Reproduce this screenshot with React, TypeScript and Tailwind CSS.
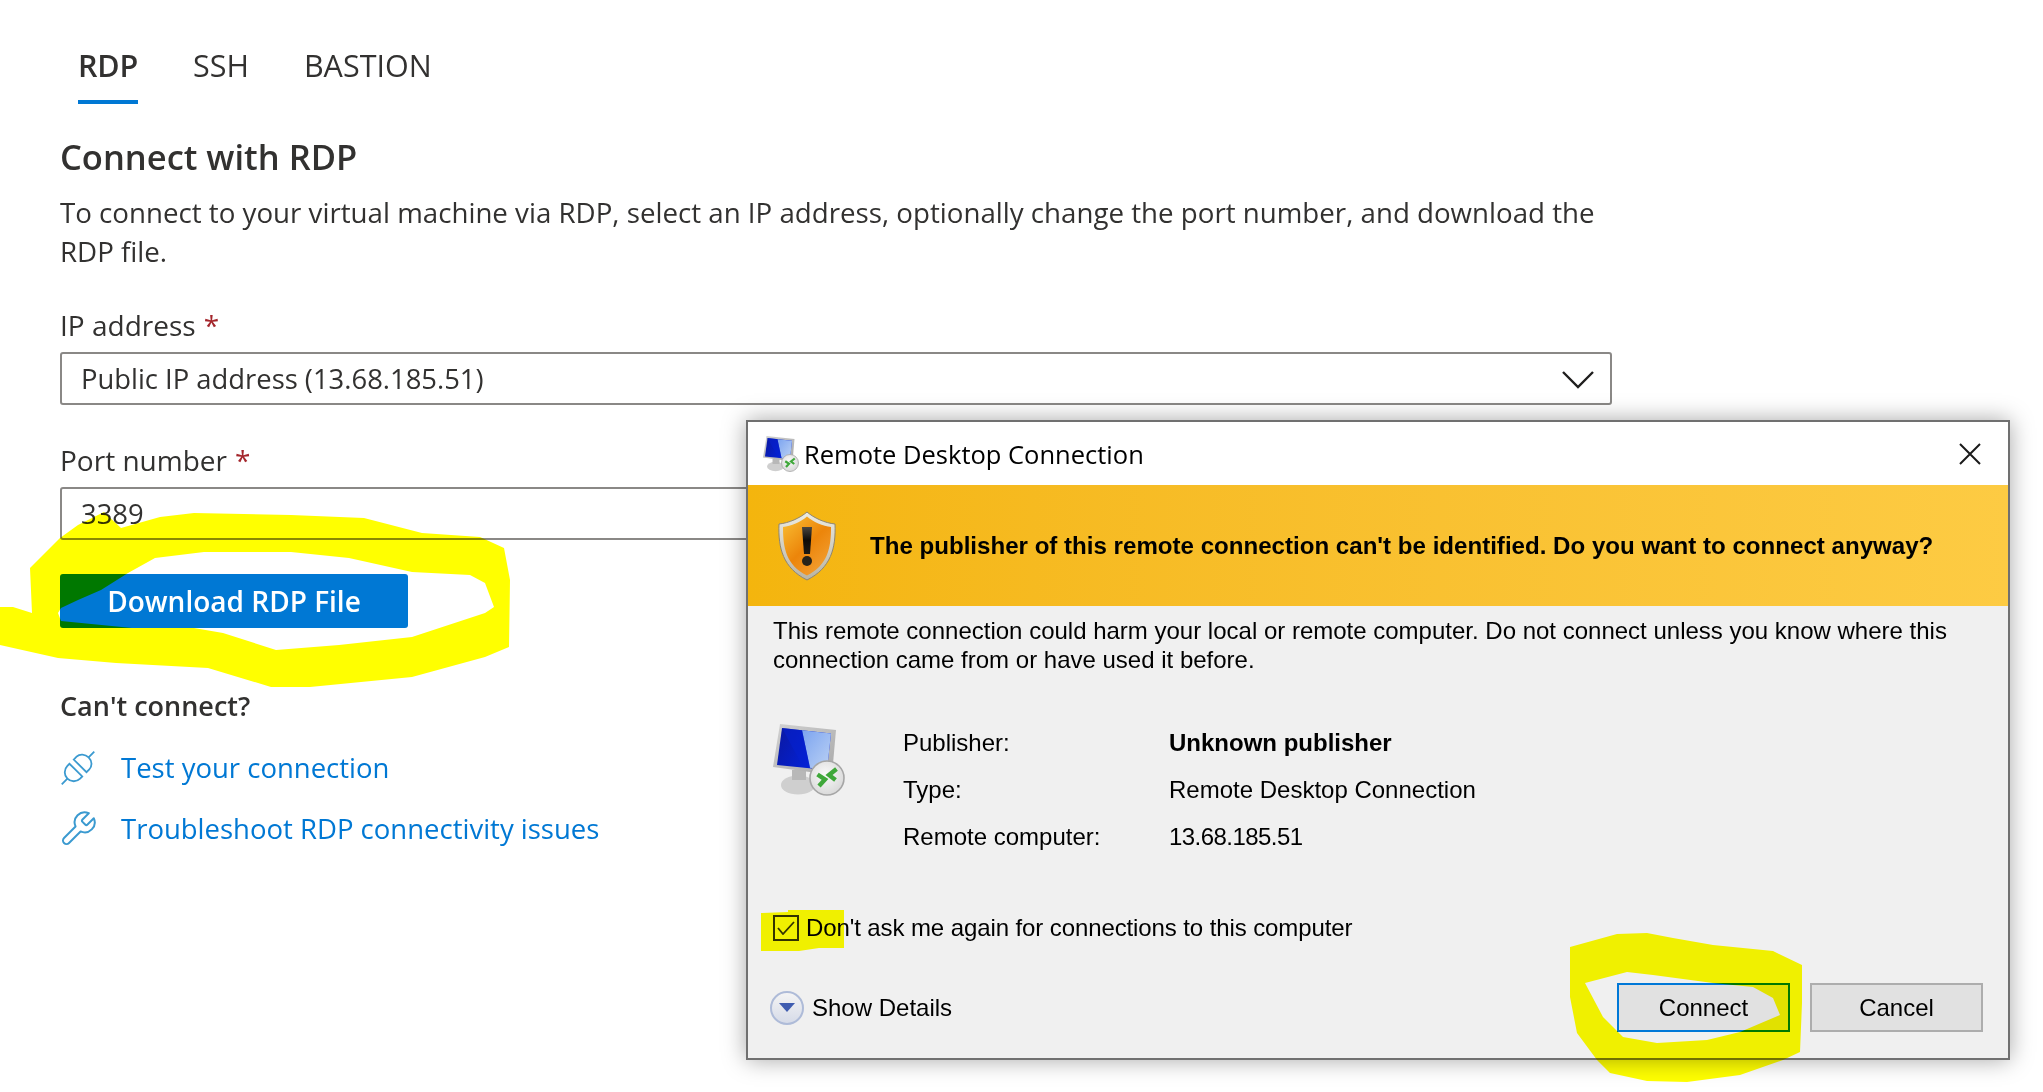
import React from "react";

const sans = "font-['Open_Sans','Noto_Sans',sans-serif]";
const arial = "font-['Liberation_Sans',Arial,sans-serif]";

function Monitor({ size }: { size: number }) {
  return (
    <svg width={size} height={size} viewBox="0 0 72 72" className="shrink-0">
      <defs>
        <linearGradient id={`bz${size}`} x1="0" y1="0" x2="1" y2="1">
          <stop offset="0" stopColor="#d2d2d2" />
          <stop offset="1" stopColor="#a8a8a8" />
        </linearGradient>
        <linearGradient id={`dk${size}`} x1="0" y1="0" x2="1" y2="0.4">
          <stop offset="0" stopColor="#0b18a0" />
          <stop offset="0.7" stopColor="#0420d0" />
          <stop offset="1" stopColor="#0a2ce0" />
        </linearGradient>
        <linearGradient id={`lt${size}`} x1="0" y1="0" x2="1" y2="1">
          <stop offset="0" stopColor="#7ca4f0" />
          <stop offset="1" stopColor="#bcd2f4" />
        </linearGradient>
        <radialGradient id={`rg${size}`} cx="0.45" cy="0.4" r="0.7">
          <stop offset="0" stopColor="#fafafa" />
          <stop offset="1" stopColor="#d4d4d4" />
        </radialGradient>
      </defs>
      <ellipse cx="25" cy="61" rx="17" ry="9.5" fill="#cfcfcf" />
      <path d="M19 46h14v10H19z" fill="#b8b8b8" />
      <path d="M7 0 63 6 59 51 0 43Z" fill={`url(#bz${size})`} />
      <path d="M9 4 58 9.5 54 46 4 41Z" fill={`url(#dk${size})`} />
      <path d="M29 6.3 58 9.5 54 46 37 43.8Z" fill={`url(#lt${size})`} />
      <path d="M9 4 29 6.3 37 43.8 30 43Z" fill="#0620d0" opacity="0.55" />
      <circle cx="54" cy="54" r="17" fill={`url(#rg${size})`} stroke="#a6a6a6" strokeWidth="1.6" />
      <path d="M44.5 50.5l7.5 5-6 6.5M63.5 45l-7.5 6 6.5 5" fill="none" stroke="#3fa83a" strokeWidth="4.4" />
    </svg>
  );
}

function Shield() {
  return (
    <svg width="58" height="70" viewBox="0 0 58 70" className="shrink-0">
      <defs>
        <linearGradient id="sh" x1="0.1" y1="0" x2="0.9" y2="1">
          <stop offset="0" stopColor="#f8bb30" />
          <stop offset="0.5" stopColor="#ec850a" />
          <stop offset="1" stopColor="#f4a43a" />
        </linearGradient>
        <linearGradient id="rim" x1="0" y1="0" x2="0" y2="1">
          <stop offset="0" stopColor="#ecebe2" />
          <stop offset="1" stopColor="#b9b4a4" />
        </linearGradient>
        <linearGradient id="ex" x1="0" y1="0" x2="0" y2="1">
          <stop offset="0" stopColor="#4a4640" />
          <stop offset="0.5" stopColor="#0d0b08" />
          <stop offset="1" stopColor="#1d1a14" />
        </linearGradient>
      </defs>
      <path d="M29 1C22 7 11 12 1 13c-1 24 4 44 28 56 24-12 29-32 28-56C47 12 36 7 29 1Z" fill="url(#rim)" stroke="#8e8571" strokeWidth="1" />
      <path d="M29 5.5C23 11 13 15 5 16c0 21 3 38 24 48.5C50 54 53 37 53 16 45 15 35 11 29 5.5Z" fill="url(#sh)" />
      <path d="M24 16h10l-2 27h-6Z" fill="url(#ex)" />
      <circle cx="29" cy="50" r="5" fill="#26221a" />
    </svg>
  );
}

function PlugIcon() {
  return (
    <svg width="36" height="36" viewBox="9 3.5 36 36" fill="none" stroke="#3b9ad0" strokeWidth="1.8" className="shrink-0">
      <g transform="rotate(45 27 21.5)">
        <path d="M27 -1.5v8M27 36.5v8" />
        <path d="M18 18.5v-4a9 8 0 0 1 18 0v4Z" />
        <path d="M18 24.5v3a9 9 0 0 0 18 0v-3Z" />
      </g>
    </svg>
  );
}

function WrenchIcon() {
  return (
    <svg width="36" height="36" viewBox="1.2 1.2 21.6 21.6" fill="none" stroke="#3b9ad0" strokeWidth="1.2" strokeLinejoin="round" className="shrink-0">
      <path d="M14.7 6.3a1 1 0 0 0 0 1.4l1.6 1.6a1 1 0 0 0 1.4 0l3.77-3.77a6 6 0 0 1-7.94 7.94l-6.91 6.91a2.12 2.12 0 0 1-3-3l6.91-6.91a6 6 0 0 1 7.94-7.94l-3.76 3.76z" />
    </svg>
  );
}

function Field({ label, value, chevron }: { label: string; value: string; chevron?: boolean }) {
  return (
    <div className="flex flex-col">
      <div className="h-[40px] flex items-center text-[28px] text-[#323130]">
        {label} <span className="ml-2 text-[#a4262c]">*</span>
      </div>
      <div className="mt-[7px] h-[53px] w-[1552px] rounded-[3px] border-2 border-[#8a8886] pl-[19px] pr-[15px] flex items-center justify-between text-[27.4px] text-[#323130]">
        <span>{value}</span>
        {chevron && (
          <svg width="34" height="20" viewBox="0 0 34 20" fill="none" stroke="#201f1e" strokeWidth="2.4">
            <path d="M2 3l15 15L32 3" />
          </svg>
        )}
      </div>
    </div>
  );
}

function Row({ k, v, bold, tight }: { k: string; v: string; bold?: boolean; tight?: boolean }) {
  return (
    <div className="flex h-[47px] items-center">
      <span className="w-[266px]">{k}</span>
      <span className={bold ? "font-bold" : tight ? "tracking-[-0.55px]" : ""}>{v}</span>
    </div>
  );
}

export default function App() {
  return (
    <div className="relative w-[2043px] h-[1092px] overflow-hidden bg-white">
      <div className={`pl-[60px] ${sans}`}>
        <div className="flex pt-[43px] pl-[18px] gap-[55px] text-[30.5px] text-[#323130]">
          <div className="h-[61px] flex flex-col justify-between font-semibold tracking-[-0.2px]">
            <span className="leading-[44px]">RDP</span>
            <span className="h-[4px] bg-[#0078d4]" />
          </div>
          <span className="leading-[44px]">SSH</span>
          <span className="leading-[44px]">BASTION</span>
        </div>
        <h1 className="mt-[30px] text-[34.5px] leading-[46px] font-semibold text-[#323130]">Connect with RDP</h1>
        <p className="mt-[13px] w-[1552px] text-[27.7px] leading-[39px] text-[#323130]">
          To connect to your virtual machine via RDP, select an IP address, optionally change the port number, and download the RDP file.
        </p>
        <div className="mt-[34px] flex flex-col gap-[35px]">
          <Field label="IP address" value="Public IP address (13.68.185.51)" chevron />
          <Field label="Port number" value="3389" />
        </div>
        <button className="mt-[34px] block w-[348px] h-[54px] rounded-[3px] bg-[#0078d4] text-white text-[28px] font-semibold">
          Download RDP File
        </button>
        <div className="mt-[58px] text-[27px] leading-[40px] font-semibold text-[#323130]">Can't connect?</div>
        <div className="mt-[22px] flex flex-col gap-[21px] text-[27.5px] text-[#0078d4]">
          <div className="flex items-center gap-[25px] h-[40px]"><PlugIcon />Test your connection</div>
          <div className="flex items-center gap-[25px] h-[40px]"><WrenchIcon />Troubleshoot RDP connectivity issues</div>
        </div>
      </div>

      {/* window over the page */}
      <div className={`absolute left-[746px] top-[420px] w-[1264px] h-[640px] flex flex-col border-2 border-[#707070] bg-[#f0f0f0] text-black shadow-[0_0_22px_rgba(0,0,0,0.35)] ${arial}`}>
        <div className={`h-[63px] bg-white flex items-center pl-[15px] pr-[27px] text-[25.5px] ${sans} font-normal`}>
          <Monitor size={36} />
          <span className="ml-[5px] flex-1 pt-[2px]">Remote Desktop Connection</span>
          <svg width="22" height="22" viewBox="0 0 22 22" fill="none" stroke="#1a1a1a" strokeWidth="2">
            <path d="M1 1l20 20M21 1 1 21" />
          </svg>
        </div>
        <div className="h-[121px] bg-gradient-to-r from-[#f4b50d] to-[#fdcb43] flex items-center pl-[30px]">
          <Shield />
          <span className="ml-[34px] pt-[2px] text-[24.1px] font-bold">The publisher of this remote connection can't be identified. Do you want to connect anyway?</span>
        </div>
        <div className="flex-1 flex flex-col text-[24px]">
          <p className="pt-[10px] pl-[25px] pr-[40px] leading-[29px]">
            This remote connection could harm your local or remote computer. Do not connect unless you know where this connection came from or have used it before.
          </p>
          <div className="mt-[47px] flex pl-[25px]">
            <div className="mt-[3px]"><Monitor size={72} /></div>
            <div className="ml-[58px] -mt-[2px]">
              <Row k="Publisher:" v="Unknown publisher" bold />
              <Row k="Type:" v="Remote Desktop Connection" />
              <Row k="Remote computer:" v="13.68.185.51" tight />
            </div>
          </div>
          <div className="mt-[55px] flex items-center pl-[25px] h-[26px]">
            <span className="w-[26px] h-[26px] border-2 border-[#333] flex items-center justify-center">
              <svg width="18" height="14" viewBox="0 0 18 14" fill="none" stroke="#333" strokeWidth="1.8"><path d="M1 7l5 6L17 1" /></svg>
            </span>
            <span className="ml-[7px] tracking-[-0.1px]">Don't ask me again for connections to this computer</span>
          </div>
          <div className="mt-[42px] flex items-center pl-[22px] pr-[25px]">
            <span className="w-[34px] h-[34px] rounded-full border-2 border-[#aebbd8] bg-gradient-to-b from-[#f4f4f4] to-[#d6dbe8] flex items-center justify-center">
              <svg width="16" height="9" viewBox="0 0 16 9"><path d="M0 0h16L8 9Z" fill="#3f5cb0" /></svg>
            </span>
            <span className="ml-[8px] flex-1">Show Details</span>
            <div className="flex gap-[20px]">
              <button className="w-[173px] h-[49px] bg-[#e1e1e1] border-2 border-[#0078d7]">Connect</button>
              <button className="w-[173px] h-[49px] bg-[#e1e1e1] border-2 border-[#adadad]">Cancel</button>
            </div>
          </div>
        </div>
      </div>

      {/* highlighter marks */}
      <svg className="absolute left-0 top-0 mix-blend-multiply pointer-events-none" width="2043" height="1092" viewBox="0 0 2043 1092">
        <path
          fillRule="evenodd"
          fill="#ffff00"
          d="M0 607L13 607L32 613L30 568L60 538L78 525L104 512L121 528L160 517L194 513L291 515L364 518L422 533L480 537L504 548L510 580L509 647L485 657L412 677L310 687L271 687L208 668L116 663L58 658L0 645Z
             M494 607L485 583L470 575L412 572L349 558L291 552L204 552L155 558L128 573L101 590L78 600L61 608L58 613L61 621L132 628L194 628L223 633L276 650L339 645L412 637L485 613Z"
        />
        <path
          fillRule="evenodd"
          fill="#ffff00"
          d="M1570 947L1617 934L1647 933L1673 938L1713 945L1773 951L1802 965L1802 1003L1800 1052L1783 1060L1740 1075L1687 1082L1647 1081L1610 1073L1597 1060L1577 1033L1570 997Z
             M1585 983L1627 972L1653 975L1713 983L1753 987L1773 998L1780 1015L1740 1032L1707 1040L1657 1043L1623 1037L1603 1017Z"
        />
        <path fill="#ffff00" d="M761 913L788 912L788 910L844 910L844 948L819 948L799 951L761 951Z" />
      </svg>
    </div>
  );
}
